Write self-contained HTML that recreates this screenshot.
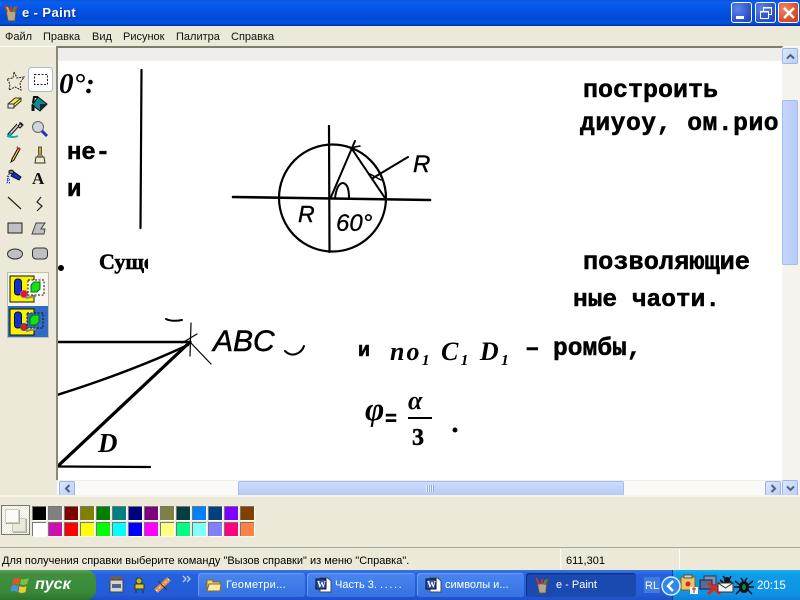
<!DOCTYPE html>
<html><head><meta charset="utf-8"><title>e - Paint</title>
<style>
html,body{margin:0;padding:0;width:800px;height:600px;overflow:hidden;background:#ece9d8}
*{box-sizing:border-box}
body{font-family:"Liberation Sans",sans-serif;font-size:11px;color:#000;position:relative}
.a{position:absolute}
#title{left:0;top:0;width:800px;height:26px;background:linear-gradient(180deg,#0a55d8 0,#0a5ff0 3px,#0456e6 8px,#0049d8 18px,#0052e0 23px,#0030a8 26px)}
#title b{position:absolute;left:22px;top:5px;color:#fff;font-size:13px;letter-spacing:.4px;text-shadow:1px 1px #0a2a90}
.wb{position:absolute;top:2px;width:21px;height:21px;border:1px solid #fff;border-radius:3px;background:radial-gradient(circle at 30% 30%,#5c86ea,#2348c8 80%)}
#menu{left:0;top:26px;width:800px;height:20px;background:#ece9d8}
#menu span{position:absolute;top:3px;font-size:11px;line-height:14px;color:#111;transform:translateY(1px)}
#canvas{left:56px;top:46px;width:727px;height:434px;background:#fff;overflow:hidden;border-top:2px solid #7f7c70;border-left:2px solid #8a877c}
#band{left:0;top:0;width:727px;height:13px;background:#f0eded}
.t{position:absolute;font-family:"Liberation Mono",monospace;font-weight:bold;font-size:25px;line-height:28px;white-space:pre;-webkit-text-stroke:.5px #000;color:#000}
.h{font-family:"Liberation Sans",sans-serif;font-style:italic;position:absolute;white-space:pre;color:#000}
#vs{left:782px;top:47px;width:18px;height:448px;background:#f5f3ee}
.sb{position:absolute;width:16px;height:16px;background:linear-gradient(135deg,#dde8fd,#bccdf6);border:1px solid #9db6ea;border-radius:2px}
#hs{left:57px;top:480px;width:725px;height:15px;background:#fbfaf6;border-top:1px solid #efeee6}
#pal{left:0;top:495px;width:800px;height:52px;background:#ece9d8}
.c{position:absolute;width:14px;height:14px;border-top:1px solid #777;border-left:1px solid #777;box-shadow:1px 1px 0 #fff}
#status{left:0;top:547px;width:800px;height:23px;background:#ece9d8;border-top:1px solid #a8a69a}
#status span{position:absolute;top:7px;font-size:11px}
.sep{position:absolute;top:1px;width:1px;height:20px;background:#cbc8b8;border-right:1px solid #fff}
#task{left:0;top:570px;width:800px;height:30px;background:linear-gradient(180deg,#3a74e0 0,#2f6be6 2px,#2660dc 5px,#245cd8 24px,#1d4fc8 30px)}
#start{left:0;top:0;width:96px;height:30px;background:linear-gradient(180deg,#5aa35a 0,#3f8f3f 4px,#388a38 22px,#2d722d 30px);border-radius:0 10px 10px 0;color:#fff;font-weight:bold;font-style:italic;font-size:16px}
.tb{position:absolute;top:3px;height:24px;border-radius:3px;background:linear-gradient(180deg,#4a86ee,#3c7ae8 60%,#3672e0);color:#fff;font-size:11px;box-shadow:inset 1px 1px 0 #6a9cf4}
.tb span{position:absolute;left:28px;top:6px;white-space:nowrap}
#tray{left:672px;top:0;width:128px;height:30px;background:linear-gradient(180deg,#18b0ee 0,#0f9ce8 4px,#1092e4 24px,#0c80d8 30px);border-left:1px solid #0a3a98}
</style></head>
<body>

<div class="a" id="title">
<svg class="a" style="left:3px;top:4px" width="17" height="18" viewBox="0 0 17 18">
<path d="M3 7h10l-1 10H5z" fill="#b0a890" stroke="#5a5040"/>
<path d="M5 8L2 1M8 8V2M11 8l3-6" stroke="#d83020" stroke-width="2"/>
<path d="M6 8L4 3" stroke="#e8b020" stroke-width="2"/><path d="M10 8l2-5" stroke="#30a040" stroke-width="2"/>
</svg>
<b>e - Paint</b>
<div class="wb" style="left:731px"><div class="a" style="left:4px;top:13px;width:8px;height:3px;background:#fff"></div></div>
<div class="wb" style="left:755px"><svg class="a" style="left:3px;top:3px" width="14" height="14" viewBox="0 0 14 14"><rect x="4.5" y="1.5" width="8" height="7" fill="none" stroke="#fff"/><rect x="1.5" y="5.5" width="8" height="7" fill="#3558d0" stroke="#fff"/><path d="M1 6h9M4 2h9" stroke="#fff"/></svg></div>
<div class="wb" style="left:778px;background:radial-gradient(circle at 30% 30%,#ec8a68,#d2401a 80%)"><svg class="a" style="left:3px;top:3px" width="14" height="14" viewBox="0 0 14 14"><path d="M2 2l10 10M12 2L2 12" stroke="#fff" stroke-width="2.4"/></svg></div>
</div>

<div class="a" id="menu">
<span style="left:5px">Файл</span><span style="left:43px">Правка</span><span style="left:92px">Вид</span><span style="left:123px">Рисунок</span><span style="left:176px">Палитра</span><span style="left:231px">Справка</span>
</div>
<div class="a" style="left:0;top:46px;width:800px;height:1px;background:#fbfaf5"></div>

<!-- toolbox -->
<svg class="a" style="left:0;top:47px" width="57" height="300" viewBox="0 47 57 300">
<rect x="28.5" y="67.5" width="24" height="24" rx="3" fill="#fff" stroke="#a9bcd2"/>
<path d="M14 72l3 6 7-1-4 6 1 7-6-3-6 3 1-6-3-5 6-1z" fill="none" stroke="#222" stroke-dasharray="2 1"/>
<rect x="34.5" y="74.5" width="13" height="10" fill="none" stroke="#222" stroke-dasharray="2 1.5"/>
<path d="M8 104L15 98H21V101L13 108H8Z" fill="#f2ec50" stroke="#333"/><path d="M8 104H14L21 98M14 104V108" fill="none" stroke="#333"/><path d="M8 104H14V108H8Z" fill="#e8e8e0" stroke="#333"/>
<path d="M38 97l9 7-7 7-8-6z" fill="#0a8a8a" stroke="#111"/><path d="M33 103l1-6 4 0" fill="none" stroke="#111" stroke-width="2"/><path d="M33 105v6" stroke="#111" stroke-width="3"/><path d="M40 104l6 0 1 1-7 6z" fill="#16252f"/>
<path d="M21 123l2 2-3 3-2-2zM19 126L10 136h-2v-2l9-10" fill="#ccc" stroke="#111"/><path d="M19 123l3 3 1-1-3-3z" fill="#111"/>
<path d="M7 136q6 2 11 0" stroke="#10b0b0" stroke-width="2" fill="none"/><path d="M10 132l-2 4 4-1z" fill="#10b0b0"/>
<circle cx="38" cy="127" r="5.5" fill="#cfd6dc" stroke="#666"/><path d="M42 131l5 5" stroke="#2030c0" stroke-width="3"/>
<path d="M18 148l-6 11-1 3 3-2 6-11z" fill="#f0d040" stroke="#111"/><path d="M17 147l3 2" stroke="#c02020" stroke-width="2"/><path d="M18 147h2" stroke="#fff"/>
<rect x="38.5" y="147" width="3" height="8" fill="#c8a820" stroke="#555"/><rect x="37" y="155" width="6" height="2" fill="#999"/><path d="M36 157h8l1 6h-10z" fill="#f2e8c0" stroke="#333"/>
<path d="M14 172l7 5-2 3-8-4z" fill="#1030d0" stroke="#111"/><path d="M9 171q3-2 5 1l-1 2-4-1z" fill="#888" stroke="#111"/>
<path d="M9 174l-2 10M7 176l2 1M7 179l3 1M7 182l3 1" stroke="#2040d0" stroke-dasharray="1 1" stroke-width="1.5" fill="none"/>
<text x="32" y="184" font-family="Liberation Serif" font-weight="bold" font-size="17" fill="#111">A</text>
<path d="M8 197l13 12" stroke="#222" stroke-width="1.2"/>
<path d="M41 197l-4 5 5 4-5 5" fill="none" stroke="#222" stroke-width="1.2"/>
<rect x="8" y="223" width="14" height="10" fill="#c0bfc6" stroke="#222"/>
<path d="M36 223h9l-4 6h4l-1 5h-12z" fill="#c0bfc6" stroke="#444"/>
<ellipse cx="15" cy="254" rx="7.5" ry="5" fill="#c0bfc6" stroke="#333"/>
<rect x="32.5" y="248" width="15" height="11" rx="3.5" fill="#c0bfc6" stroke="#333"/>
<rect x="7.5" y="272.5" width="41" height="65" fill="#f6f5ee" stroke="#c0bdae"/>
<rect x="8" y="306" width="40" height="31" fill="#316ac5"/>
<g id="ic1">
<rect x="10" y="276" width="24" height="26" fill="#f8f400" stroke="#111"/>
<rect x="14.5" y="279" width="7" height="16" rx="3" fill="#1030d0" stroke="#111"/>
<circle cx="24" cy="294" r="3.5" fill="#e81818" stroke="#c040c0"/>
<rect x="28" y="280" width="16" height="15" fill="#fff" stroke="#111" stroke-dasharray="2 1.5"/>
<path d="M31 285l3-3h6v7l-3 3h-6z" fill="#18e018" stroke="#0a6a0a"/>
<path d="M26 298l10-2" stroke="#888" stroke-width="2"/>
</g>
<g transform="translate(0,33)">
<rect x="10" y="276" width="24" height="26" fill="#f8f400" stroke="#111"/>
<rect x="14.5" y="279" width="7" height="16" rx="3" fill="#1030d0" stroke="#111"/>
<circle cx="24" cy="294" r="3.5" fill="#e81818" stroke="#3050b0"/>
<rect x="27" y="280" width="16" height="15" fill="#316ac5" stroke="#111" stroke-dasharray="2 1.5"/>
<path d="M30 285l3-3h6v7l-3 3h-6z" fill="#18e018" stroke="#0a6a0a"/>
<path d="M26 298l10-2" stroke="#888" stroke-width="2"/>
</g>
</svg>

<!-- canvas -->
<div class="a" id="canvas">
<div class="a" id="band"></div>
<svg class="a" style="left:-58px;top:-48px" width="800" height="500" viewBox="0 0 800 500" fill="none" stroke="#000" stroke-linecap="round">
<path d="M141.500 70L140.500 228" stroke-width="2.200"/>
<path d="M329 126L329.500 252" stroke-width="2.200"/>
<path d="M233 197L300 198L430 200" stroke-width="2.600"/>
<circle cx="332.500" cy="198" r="53.500" stroke-width="2.200"/>
<path d="M331 197L355 141" stroke-width="2"/>
<path d="M352 149L385 198" stroke-width="2"/>
<path d="M350 148L360 146" stroke-width="1.500"/>
<path d="M335 198Q337 183 343 183Q349 184 349 198" stroke-width="2"/>
<path d="M373 178L408 157" stroke-width="2"/>
<path d="M370 174L381 180" stroke-width="1.500"/>
<path d="M57 342L190 342" stroke-width="2.600"/>
<path d="M57 395Q130 372 188 345" stroke-width="2.400"/>
<path d="M58 466L190 342" stroke-width="3.200"/>
<path d="M58 466.500L150 467" stroke-width="2.200"/>
<path d="M191 323L190 356M197 334L182 343M190 342L211 364" stroke-width="1.200"/>
<path d="M166 319Q172 322 182 320" stroke-width="2"/>
<path d="M285 351Q290 356 296 354Q302 352 304 346" stroke-width="2"/>
<circle cx="61" cy="268" r="2.500" fill="#000"/>
<circle cx="455" cy="430" r="2" fill="#000"/>
</svg>

<span class="h" style="left:1px;top:20px;font:italic bold 29px 'Liberation Serif',serif">0°:</span>
<span class="t" style="left:9px;top:92px;font-size:24px">не-</span>
<span class="t" style="left:9px;top:129px;font-size:24px">и</span>
<div class="a" style="left:41px;top:200px;width:49px;height:32px;overflow:hidden"><span class="t" style="left:0;top:0;font-size:22px;font-family:'Liberation Serif',serif">Суще</span></div>
<span class="t" style="left:525px;top:29px">построить</span>
<span class="t" style="left:522px;top:62px;font-size:24.700px;letter-spacing:.5px">диуоу, ом.рио</span>
<span class="t" style="left:525px;top:201px;font-size:25.300px">позволяющие</span>
<span class="t" style="left:515px;top:239px;font-size:24.500px">ные чаоти.</span>

<span class="h" style="left:240px;top:153px;font-size:23px;-webkit-text-stroke:.4px #000">R</span>
<span class="h" style="left:355px;top:103px;font-size:24px;-webkit-text-stroke:.4px #000">R</span>
<span class="h" style="left:278px;top:162px;font-size:24px;-webkit-text-stroke:.3px #000">60°</span>
<span class="h" style="left:155px;top:277px;font-size:30px;-webkit-text-stroke:.5px #000">ABC</span>
<span class="h" style="left:40px;top:380px;font:italic bold 27px 'Liberation Serif',serif">D</span>
<span class="t" style="left:300px;top:290px;font-size:20px">и</span>
<span class="h" style="left:332px;top:289px;font:italic bold 26px 'Liberation Serif',serif;letter-spacing:2px">по₁ С₁ D₁</span>
<span class="t" style="left:467px;top:288px;font-size:24.600px">–</span>
<span class="t" style="left:495px;top:288px;font-size:24.600px">ромбы,</span>
<span class="h" style="left:307px;top:344px;font:italic bold 33px 'Liberation Serif',serif">φ</span>
<span class="t" style="left:327px;top:359px;font-size:20px">=</span>
<span class="h" style="left:350px;top:338px;font:italic bold 26px 'Liberation Serif',serif">α</span>
<div class="a" style="left:350px;top:369px;width:24px;height:2px;background:#000"></div>
<span class="t" style="left:354px;top:376px;font-size:24px;font-family:'Liberation Serif',serif">3</span>
</div>

<!-- vertical scrollbar -->
<div class="a" id="vs">
<div class="sb" style="left:0;top:1px"><svg class="a" style="left:3px;top:4px" width="9" height="7" viewBox="0 0 9 7"><path d="M1 5.500L4.500 2 8 5.500" fill="none" stroke="#4d6185" stroke-width="2"/></svg></div>
<div class="a" style="left:0;top:53px;width:16px;height:165px;background:linear-gradient(90deg,#c6d6fb,#b6cbf8);border:1px solid #a4bdf0;border-radius:2px"></div>
<div class="sb" style="left:0;top:433px"><svg class="a" style="left:3px;top:4px" width="9" height="7" viewBox="0 0 9 7"><path d="M1 1.500L4.500 5 8 1.500" fill="none" stroke="#4d6185" stroke-width="2"/></svg></div>
</div>

<!-- horizontal scrollbar -->
<div class="a" id="hs">
<div class="sb" style="left:2px;top:0;height:15px"><svg class="a" style="left:4px;top:2px" width="7" height="9" viewBox="0 0 7 9"><path d="M5.500 1L2 4.500 5.500 8" fill="none" stroke="#4d6185" stroke-width="2"/></svg></div>
<div class="a" style="left:181px;top:0;width:386px;height:15px;background:linear-gradient(180deg,#cddcfc,#b6cbf8);border:1px solid #a4bdf0;border-radius:2px"><div class="a" style="left:187px;top:3px;width:8px;height:7px;background:repeating-linear-gradient(90deg,#eef3fe 0 1px,#8ca8e4 1px 2px)"></div></div>
<div class="sb" style="left:708px;top:0;height:15px"><svg class="a" style="left:4px;top:2px" width="7" height="9" viewBox="0 0 7 9"><path d="M1.500 1L5 4.500 1.500 8" fill="none" stroke="#4d6185" stroke-width="2"/></svg></div>
</div>

<!-- palette -->
<div class="a" id="pal">
<div class="a" style="left:0;top:0;width:800px;height:2px;background:#f6f4ea"></div>
<div class="a" style="left:1px;top:10px;width:29px;height:30px;border:1px solid #777;background:repeating-conic-gradient(#fff 0 25%,#ece9d8 0 50%) 0 0/2px 2px"></div>
<div class="a" style="left:12px;top:23px;width:14px;height:14px;background:#ece9d8;border:1px solid #c9c6b4;box-shadow:1px 1px 0 #aaa"></div>
<div class="a" style="left:5px;top:14px;width:14px;height:14px;background:#fbfbf6;border:1px solid #d0cdb9;box-shadow:1px 1px 0 #aaa"></div>
<div class="c" style="left:32px;top:11px;background:#000"></div><div class="c" style="left:48px;top:11px;background:#808080"></div><div class="c" style="left:64px;top:11px;background:#800000"></div><div class="c" style="left:80px;top:11px;background:#808000"></div><div class="c" style="left:96px;top:11px;background:#008000"></div><div class="c" style="left:112px;top:11px;background:#008080"></div><div class="c" style="left:128px;top:11px;background:#000080"></div><div class="c" style="left:144px;top:11px;background:#800080"></div><div class="c" style="left:160px;top:11px;background:#808040"></div><div class="c" style="left:176px;top:11px;background:#004040"></div><div class="c" style="left:192px;top:11px;background:#0080ff"></div><div class="c" style="left:208px;top:11px;background:#004080"></div><div class="c" style="left:224px;top:11px;background:#8000ff"></div><div class="c" style="left:240px;top:11px;background:#804000"></div>
<div class="c" style="left:32px;top:27px;background:#fff"></div><div class="c" style="left:48px;top:27px;background:#cc10b0"></div><div class="c" style="left:64px;top:27px;background:#ff0000"></div><div class="c" style="left:80px;top:27px;background:#ffff00"></div><div class="c" style="left:96px;top:27px;background:#00ff00"></div><div class="c" style="left:112px;top:27px;background:#00ffff"></div><div class="c" style="left:128px;top:27px;background:#0000ff"></div><div class="c" style="left:144px;top:27px;background:#ff00ff"></div><div class="c" style="left:160px;top:27px;background:#ffff80"></div><div class="c" style="left:176px;top:27px;background:#00ff80"></div><div class="c" style="left:192px;top:27px;background:#80ffff"></div><div class="c" style="left:208px;top:27px;background:#8080ff"></div><div class="c" style="left:224px;top:27px;background:#ff0080"></div><div class="c" style="left:240px;top:27px;background:#ff8040"></div>
</div>

<!-- status -->
<div class="a" id="status">
<span style="left:2px">Для получения справки выберите команду "Вызов справки" из меню "Справка".</span>
<div class="sep" style="left:560px"></div>
<span style="left:566px">611,301</span>
<div class="sep" style="left:679px"></div>
</div>

<!-- taskbar -->
<div class="a" id="task">
<div class="a" id="start">
<svg class="a" style="left:11px;top:6px" width="19" height="18" viewBox="0 0 19 18">
<path d="M2 3q3-2 7 0l-1 6q-4-2-7 0z" fill="#e8502a"/><path d="M10 3q3 1 8-1l-2 6q-4 2-7 0z" fill="#7cc040"/>
<path d="M0.500 10q3-2 7 0l-1 6q-4-2-7 0z" fill="#4a90e0"/><path d="M8.500 10q3 2 7 0l-1 6q-4 2-7 0z" fill="#f8c830"/></svg>
<span class="a" style="left:35px;top:6px">пуск</span>
</div>
<svg class="a" style="left:108px;top:6px" width="70" height="18" viewBox="0 0 70 18">
<rect x="2" y="4" width="13" height="12" fill="#d8d4c8" stroke="#444"/><path d="M2 4l3-3 3 2 3-2 3 2" stroke="#8a5a20" stroke-width="2" fill="none"/><rect x="4" y="8" width="9" height="4" fill="#506090"/>
<circle cx="31" cy="5" r="3" fill="#b8c020" stroke="#333"/><rect x="27" y="8" width="9" height="5" fill="#d8c820" stroke="#333"/><path d="M28 13v4M35 13v4" stroke="#304080" stroke-width="2"/>
<path d="M48 15L61 3" stroke="#e8903a" stroke-width="5"/><path d="M48 15L61 3" stroke="#fff" stroke-width="1" stroke-dasharray="2 2"/><path d="M50 5l9 9" stroke="#333" stroke-width="1"/>
</svg>
<svg class="a" style="left:182px;top:5px" width="10" height="8" viewBox="0 0 10 8"><path d="M1 1l3 3-3 3M5 1l3 3-3 3" fill="none" stroke="#bcd2f8" stroke-width="1.300"/></svg>

<div class="tb" style="left:198px;width:107px"><svg class="a" style="left:8px;top:4px" width="16" height="15" viewBox="0 0 16 15"><path d="M1 3h5l1 2h7v9H1z" fill="#f4d878" stroke="#8a6a20"/><path d="M1 14l2-7h12l-1 7z" fill="#fbe9a4" stroke="#8a6a20"/></svg><span style="letter-spacing:.25px">Геометри...</span></div>
<div class="tb" style="left:307px;width:108px"><svg class="a" style="left:8px;top:4px" width="17" height="16" viewBox="0 0 17 16"><path d="M5 1h8l3 3v11H5z" fill="#fff" stroke="#445"/><rect x="1" y="2" width="10" height="10" fill="#2a4ab0" stroke="#111"/><text x="2" y="10.500" font-size="9" font-weight="bold" font-family="Liberation Serif" fill="#fff">W</text></svg><span>Часть 3. <span style="position:static;letter-spacing:1.600px">.....</span></span></div>
<div class="tb" style="left:417px;width:107px"><svg class="a" style="left:8px;top:4px" width="17" height="16" viewBox="0 0 17 16"><path d="M5 1h8l3 3v11H5z" fill="#fff" stroke="#445"/><rect x="1" y="2" width="10" height="10" fill="#2a4ab0" stroke="#111"/><text x="2" y="10.500" font-size="9" font-weight="bold" font-family="Liberation Serif" fill="#fff">W</text></svg><span>символы и...</span></div>
<div class="tb" style="left:526px;width:110px;background:#1a4ab0;box-shadow:inset 1px 1px 1px #0f2f80"><svg class="a" style="left:8px;top:4px" width="17" height="17" viewBox="0 0 17 18"><path d="M3 7h10l-1 10H5z" fill="#b0a890" stroke="#5a5040"/><path d="M5 8L2 1M8 8V2M11 8l3-6" stroke="#d83020" stroke-width="2"/><path d="M10 8l2-5" stroke="#30a040" stroke-width="2"/></svg><span style="left:30px">e - Paint</span></div>

<div class="a" style="left:644px;top:7px;width:16px;height:16px;background:#3f7ce0"></div>
<span class="a" style="left:645px;top:10px;color:#fff;font-size:11px">RL</span>
<div class="a" id="tray">
<svg class="a" style="left:-10px;top:4px" width="88" height="22" viewBox="0 0 88 22">
<rect x="18" y="3" width="14" height="13" fill="#e8c860" stroke="#806020"/><rect x="21" y="1" width="8" height="3" fill="#d0d0d0" stroke="#555"/><circle cx="25" cy="10" r="2.500" fill="#e02020"/><rect x="27" y="13" width="8" height="7" fill="#f8f8f8"/><path d="M29 15h4M31 13v6" stroke="#b02020"/>
<rect x="41" y="2" width="12" height="9" fill="#8090b8" stroke="#334"/><rect x="37" y="6" width="12" height="9" fill="#5a6a9a" stroke="#223"/>
<path d="M45 9l12 11M57 9L45 20" stroke="#e02818" stroke-width="3"/>
<g transform="translate(-7,0)"><path d="M64 6l4 3 4-3 4 3M67 2l3 4M75 2l-2 4" stroke="#111" stroke-width="1.500" fill="none"/><circle cx="71" cy="6" r="3" fill="#111"/>
<rect x="62" y="9" width="15" height="9" fill="#f4f4f4" stroke="#333"/><path d="M62 9l7.500 5L77 9" fill="none" stroke="#333"/></g>
</svg>
<svg class="a" style="left:-12px;top:6px" width="20" height="20" viewBox="0 0 20 20"><circle cx="10" cy="10" r="9" fill="#3088e8" stroke="#dbeeff" stroke-width="1.500"/><path d="M12 5l-5 5 5 5" fill="none" stroke="#fff" stroke-width="2.500"/></svg>
<svg class="a" style="left:61px;top:5px" width="20" height="22" viewBox="0 0 20 22"><ellipse cx="10" cy="12" rx="5" ry="6" fill="#111"/><path d="M1 6l5 4M19 6l-5 4M0 12h5M20 12h-5M2 19l4-4M18 19l-4-4M7 3l2 3M13 3l-2 3" stroke="#111" stroke-width="1.500"/><ellipse cx="10" cy="12" rx="2" ry="3" fill="#0a8a3a"/></svg>
<span class="a" style="left:84px;top:10px;color:#fff;font-size:11.500px">20:15</span>
</div>
</div>
</body></html>
